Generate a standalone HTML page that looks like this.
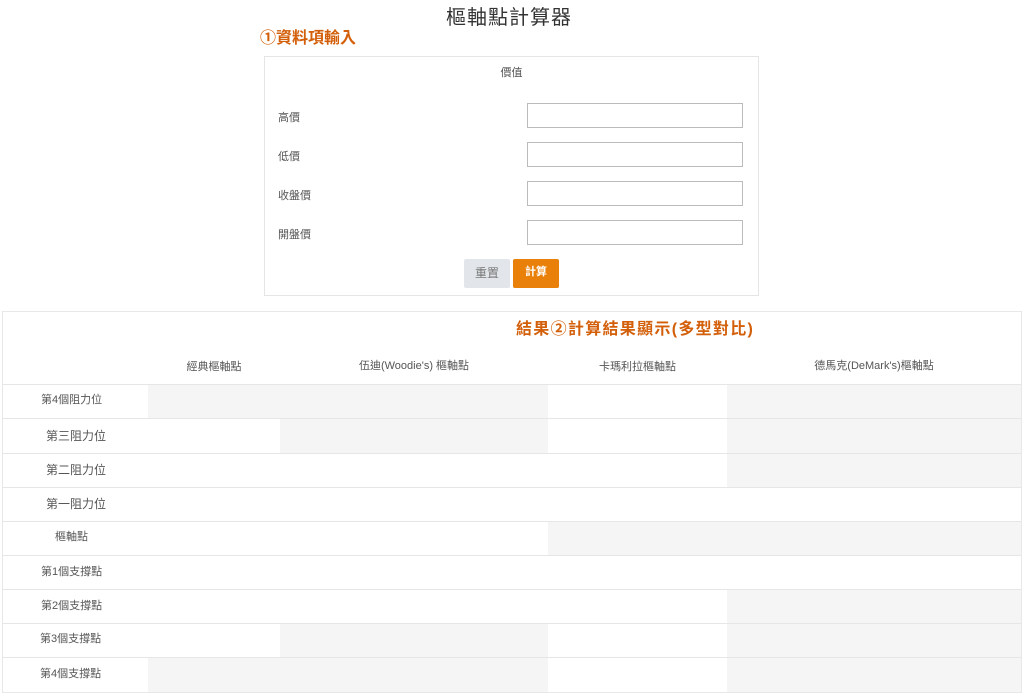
<!DOCTYPE html>
<html><head><meta charset="utf-8"><style>
*{margin:0;padding:0;box-sizing:border-box}
body{width:1024px;height:696px;background:#fff;font-family:"Liberation Sans","Noto Sans CJK TC",sans-serif;color:#555;position:relative;overflow:hidden}
.a{position:absolute}
.t{font-size:11px;color:#555;white-space:nowrap}
.in{position:absolute;left:527px;width:216px;height:25px;border:1px solid #bbb;background:#fff}
.g{position:absolute;background:#f5f5f5}
.hl{position:absolute;left:3px;width:1018px;height:1px;background:#e6e6e6}
</style></head><body>
<div class="a" style="left:446px;top:1px;font-size:20px;color:#333;letter-spacing:1px">樞軸點計算器</div>
<div class="a" style="left:260px;top:24px;font-size:16px;font-weight:bold;color:#d35f0a">①資料項輸入</div>
<div class="a" style="left:264px;top:56px;width:495px;height:240px;border:1px solid #e5e5e5"></div>
<div class="a t" style="left:264px;width:495px;top:64px;text-align:center">價值</div>
<div class="a t" style="left:278px;top:109px">高價</div>
<div class="a t" style="left:278px;top:148px">低價</div>
<div class="a t" style="left:278px;top:187px">收盤價</div>
<div class="a t" style="left:278px;top:226px">開盤價</div>
<div class="in" style="top:103px"></div>
<div class="in" style="top:142px"></div>
<div class="in" style="top:181px"></div>
<div class="in" style="top:220px"></div>
<div class="a" style="left:464px;top:259px;width:46px;height:29px;background:#e2e6ea;border-radius:2px;font-size:12px;color:#777;text-align:center;line-height:28px">重置</div>
<div class="a" style="left:513px;top:259px;width:46px;height:29px;background:#e8800a;border-radius:2px;font-size:11px;font-weight:bold;color:#fff;text-align:center;line-height:27px">計算</div>

<div class="a" style="left:2px;top:311px;width:1020px;height:382px;border:1px solid #e8e8e8"></div>
<div class="a" style="left:516px;top:315px;font-size:16px;font-weight:bold;color:#d35f0a;letter-spacing:1.3px">結果②計算結果顯示(多型對比)</div>
<div class="a t" style="left:148px;width:132px;top:358px;text-align:center">經典樞軸點</div>
<div class="a t" style="left:280px;width:268px;top:357px;text-align:center">伍迪(Woodie's) 樞軸點</div>
<div class="a t" style="left:548px;width:179px;top:358px;text-align:center">卡瑪利拉樞軸點</div>
<div class="a t" style="left:727px;width:294px;top:357px;text-align:center">德馬克(DeMark's)樞軸點</div>

<div class="g" style="left:148px;top:385px;width:400px;height:33px"></div>
<div class="g" style="left:727px;top:385px;width:294px;height:33px"></div>
<div class="g" style="left:280px;top:419px;width:268px;height:34px"></div>
<div class="g" style="left:727px;top:419px;width:294px;height:34px"></div>
<div class="g" style="left:727px;top:454px;width:294px;height:33px"></div>
<div class="g" style="left:548px;top:522px;width:473px;height:33px"></div>
<div class="g" style="left:727px;top:590px;width:294px;height:33px"></div>
<div class="g" style="left:280px;top:624px;width:268px;height:33px"></div>
<div class="g" style="left:727px;top:624px;width:294px;height:33px"></div>
<div class="g" style="left:148px;top:658px;width:400px;height:34px"></div>
<div class="g" style="left:727px;top:658px;width:294px;height:34px"></div>

<div class="hl" style="top:384px"></div><div class="hl" style="top:418px"></div><div class="hl" style="top:453px"></div><div class="hl" style="top:487px"></div><div class="hl" style="top:521px"></div><div class="hl" style="top:555px"></div><div class="hl" style="top:589px"></div><div class="hl" style="top:623px"></div><div class="hl" style="top:657px"></div>

<div class="a t" style="left:41px;top:391px">第4個阻力位</div>
<div class="a t" style="left:46px;top:427px;font-size:12px">第三阻力位</div>
<div class="a t" style="left:46px;top:461px;font-size:12px">第二阻力位</div>
<div class="a t" style="left:46px;top:495px;font-size:12px">第一阻力位</div>
<div class="a t" style="left:55px;top:528px">樞軸點</div>
<div class="a t" style="left:41px;top:563px">第1個支撐點</div>
<div class="a t" style="left:41px;top:597px">第2個支撐點</div>
<div class="a t" style="left:40px;top:630px">第3個支撐點</div>
<div class="a t" style="left:40px;top:665px">第4個支撐點</div>
</body></html>
